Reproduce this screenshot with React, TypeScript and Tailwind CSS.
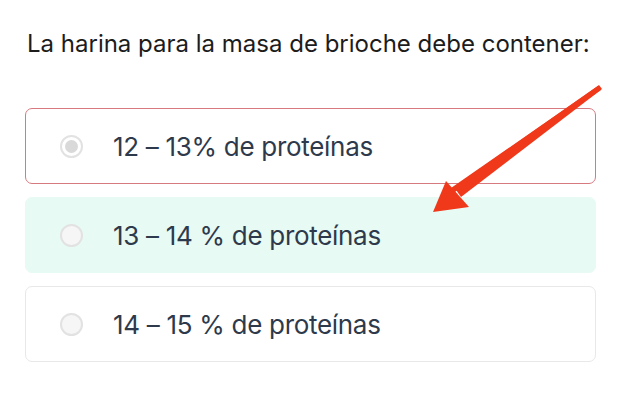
import React from "react";

const options = [
  { label: "12 – 13% de proteínas", state: "wrong" },
  { label: "13 – 14 % de proteínas", state: "correct" },
  { label: "14 – 15 % de proteínas", state: "plain" },
];

export default function App() {
  return (
    <div
      className="relative w-[620px] h-[400px] bg-white overflow-hidden"
      style={{ fontFamily: "Inter, 'Noto Sans', sans-serif" }}
    >
      <div className="px-[25px] pt-[28px]">
        <h1 className="text-[24px] leading-[32px] text-[#1c1c1c] tracking-[0px] pl-[2px] font-normal">
          La harina para la masa de brioche debe contener:
        </h1>
        <div className="mt-[48px] flex flex-col gap-[13px] w-[571px]">
          {options.map((o) => (
            <div
              key={o.label}
              className={
                "h-[76px] rounded-[7px] flex items-center pl-[34px] " +
                (o.state === "wrong"
                  ? "border border-[#d67a80] bg-white"
                  : o.state === "correct"
                  ? "border border-[#e8faf4] bg-[#e8faf4]"
                  : "border border-[#e8e8e8] bg-white")
              }
            >
              <div
                className={
                  "w-[23px] h-[23px] rounded-full border-2 border-[#e2e2e2] flex items-center justify-center " +
                  (o.state === "wrong" ? "bg-white" : "bg-[#f6f6f6]")
                }
              >
                {o.state === "wrong" && (
                  <div className="w-[13px] h-[13px] rounded-full bg-[#d9d9d9]" />
                )}
              </div>
              <span className="ml-[30px] pt-[2px] text-[26px] leading-none text-[#2e3a4b] tracking-[-0.3px]">
                {o.label}
              </span>
            </div>
          ))}
        </div>
      </div>
      <svg
        className="absolute left-0 top-0 pointer-events-none"
        width="620"
        height="400"
        viewBox="0 0 620 400"
      >
        <polygon points="598,86 601,90 455,192 451,188" fill="#f0391a" />
        <polygon points="602,89 599,85 454,187 461,197" fill="#f0391a" />
        <polygon points="433,212 446,181 469,207" fill="#f0391a" />
      </svg>
    </div>
  );
}
